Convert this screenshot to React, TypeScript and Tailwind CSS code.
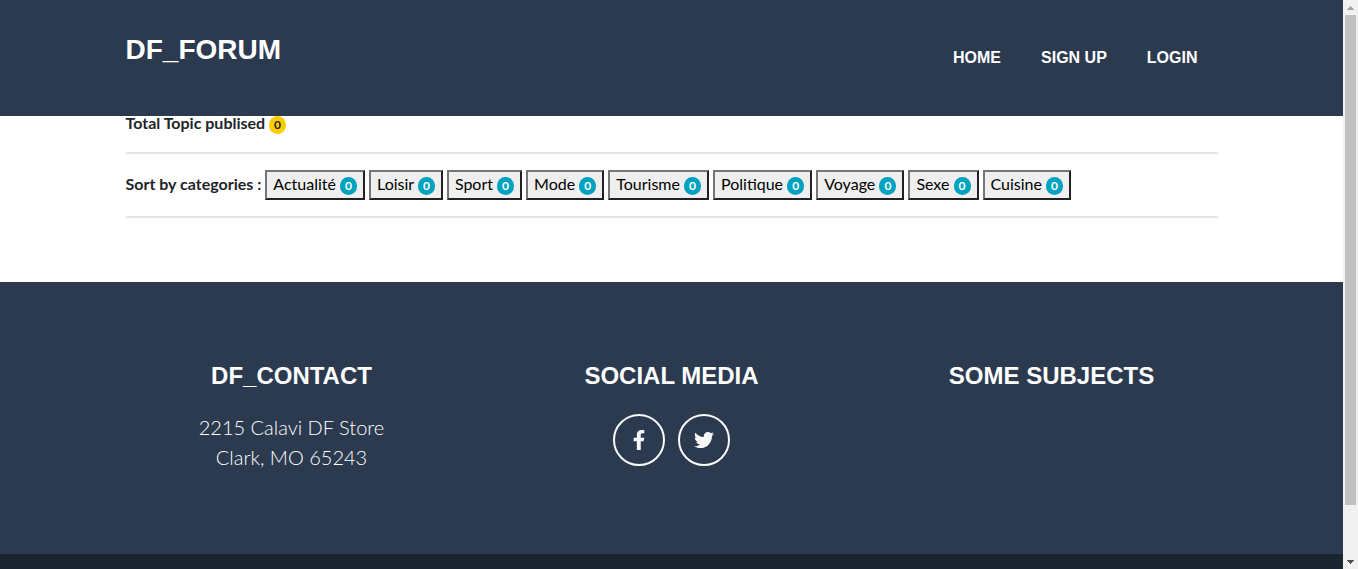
import type { ReactNode } from 'react';
import { FaFacebookF, FaTwitter } from 'react-icons/fa';

const links = ['Home', 'Sign up', 'Login'];

const categories = [
  'Actualité',
  'Loisir',
  'Sport',
  'Mode',
  'Tourisme',
  'Politique',
  'Voyage',
  'Sexe',
  'Cuisine',
].map((name) => ({ name, count: 0 }));

function Badge({ className, children }: { className: string; children: ReactNode }) {
  return (
    <span
      className={`inline-block rounded-full px-[5px] py-[3px] text-center align-baseline text-xs leading-3 font-bold ${className}`}
    >
      {children}
    </span>
  );
}

function FooterColumn({ title, children }: { title: string; children?: ReactNode }) {
  return (
    <div className="px-3 text-center">
      <h4 className="mb-[22px] font-['Liberation_Sans',sans-serif] text-2xl leading-7 font-bold uppercase">
        {title}
      </h4>
      {children}
    </div>
  );
}

function SocialLink({ label, children }: { label: string; children: ReactNode }) {
  return (
    <a
      href="#"
      aria-label={label}
      className="flex size-[52px] items-center justify-center rounded-full border-2 border-[#f8f9fa] text-xl text-[#f8f9fa]"
    >
      {children}
    </a>
  );
}

function Scrollbar() {
  return (
    <div aria-hidden="true" className="flex w-[15px] shrink-0 flex-col items-center bg-[#f1f1f1]">
      <div className="flex h-[15px] items-center">
        <svg width="7" height="4" viewBox="0 0 7 4" shapeRendering="crispEdges">
          <path d="M3 0h1v1h1v1h1v1h1v1H0V3h1V2h1V1h1z" fill="#a3a3a3" />
        </svg>
      </div>
      <div className="w-full flex-1 px-0.5">
        <div className="h-[91%] bg-[#c1c1c1]" />
      </div>
      <div className="flex h-[15px] items-center">
        <svg width="7" height="4" viewBox="0 0 7 4" shapeRendering="crispEdges">
          <path d="M0 0h7v1H6v1H5v1H4v1H3V3H2V2H1V1H0z" fill="#505050" />
        </svg>
      </div>
    </div>
  );
}

export default function App() {
  return (
    <div className="flex h-screen overflow-hidden bg-white font-[Lato,sans-serif] text-base text-[#212529]">
      <div className="min-w-0 flex-1 overflow-hidden">
        <header className="relative z-10 bg-[#2c3a50] py-[29px] font-['Liberation_Sans',sans-serif] font-bold text-white uppercase">
          <div className="mx-auto flex max-w-[1140px] items-center justify-between px-6">
            <a href="#" className="pb-4 text-[28px] leading-[42px]">
              DF_Forum
            </a>
            <nav className="flex">
              {links.map((link) => (
                <a key={link} href="#" className="px-5 leading-6">
                  {link}
                </a>
              ))}
            </nav>
          </div>
        </header>

        <main className="mx-auto -mt-[5px] mb-16 max-w-[1140px] px-6">
          <p className="mb-[17px] leading-6 font-bold">
            Total Topic publised <Badge className="bg-[#ffcc00] text-[#212529]">0</Badge>
          </p>
          <hr className="mb-4 border-t-2 border-[#e5e5e5]" />
          <div className="flex flex-wrap items-baseline gap-1 leading-6">
            <span className="font-bold">Sort by categories :</span>
            {categories.map(({ name, count }) => (
              <button
                key={name}
                type="button"
                className="border-2 border-t-[#767676] border-r-[#212121] border-b-[#212121] border-l-[#767676] bg-[#efefef] px-1.5 pb-0.5 leading-6 text-black"
              >
                {name} <Badge className="bg-[#00a3bf] text-white">{count}</Badge>
              </button>
            ))}
          </div>
          <hr className="mt-4 border-t-2 border-[#e5e5e5]" />
        </main>

        <footer className="bg-[#2c3a50] py-20 text-white">
          <div className="mx-auto grid max-w-[1140px] grid-cols-3">
            <FooterColumn title="DF_Contact">
              <p className="pb-0.5 text-xl leading-[30px] font-light">
                2215 Calavi DF Store
                <br />
                Clark, MO 65243
              </p>
            </FooterColumn>
            <FooterColumn title="Social media">
              <div className="flex justify-center gap-[13px] pt-0.5">
                <SocialLink label="Facebook">
                  <FaFacebookF />
                </SocialLink>
                <SocialLink label="Twitter">
                  <FaTwitter />
                </SocialLink>
              </div>
            </FooterColumn>
            <FooterColumn title="Some subjects" />
          </div>
        </footer>
        <div className="bg-[#1a252f] py-8" />
      </div>
      <Scrollbar />
    </div>
  );
}
